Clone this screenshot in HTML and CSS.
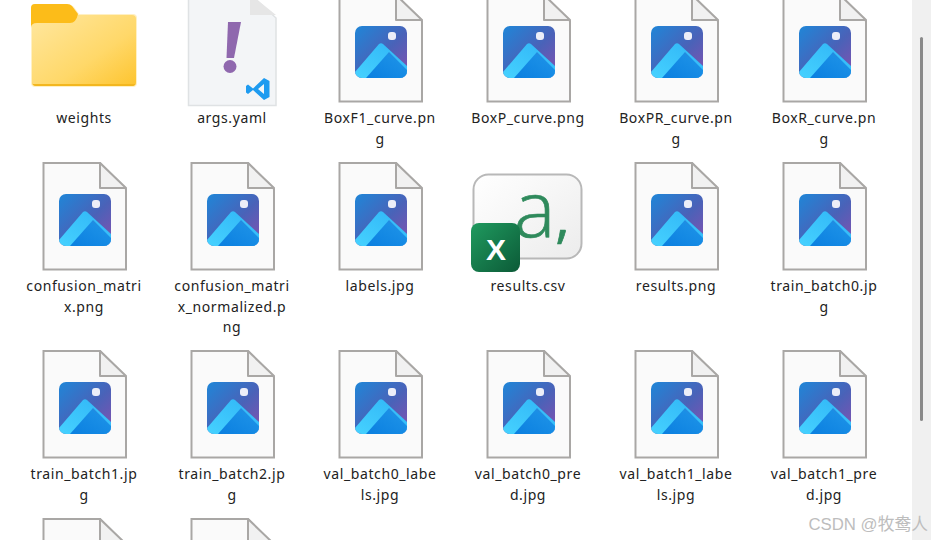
FILE: index.html
```html
<!DOCTYPE html>
<html>
<head>
  <title>exp</title>
  <link rel="stylesheet" href="styles.css">
</head>
<body>
  <svg class="defs" aria-hidden="true">
    <defs>
      <linearGradient id="imgBg" x1="0" y1="0" x2="1" y2="1">
        <stop offset="0" stop-color="#1f86d8"/>
        <stop offset="0.55" stop-color="#4a62b8"/>
        <stop offset="1" stop-color="#8550b0"/>
      </linearGradient>
      <linearGradient id="imgHill" x1="0" y1="1" x2="1" y2="0">
        <stop offset="0" stop-color="#46d2ff"/>
        <stop offset="1" stop-color="#2fb4f6"/>
      </linearGradient>
      <linearGradient id="imgHill2" x1="0" y1="1" x2="1" y2="0">
        <stop offset="0" stop-color="#0a7fe0"/>
        <stop offset="0.7" stop-color="#1a8fe6"/>
        <stop offset="1" stop-color="#4a7ac8"/>
      </linearGradient>
      <linearGradient id="folderBody" x1="0" y1="0" x2="1" y2="1">
        <stop offset="0" stop-color="#ffe79f"/>
        <stop offset="0.6" stop-color="#ffd869"/>
        <stop offset="1" stop-color="#fdc42e"/>
      </linearGradient>
      <linearGradient id="sheetBg" x1="0" y1="0" x2="1" y2="1">
        <stop offset="0" stop-color="#ffffff"/>
        <stop offset="1" stop-color="#ececec"/>
      </linearGradient>
      <linearGradient id="xlBg" x1="0" y1="0" x2="1" y2="1">
        <stop offset="0" stop-color="#1f9a5f"/>
        <stop offset="1" stop-color="#0c5a37"/>
      </linearGradient>
      <clipPath id="imgClip"><rect x="49" y="32" width="52" height="52" rx="7"/></clipPath>
      <symbol id="image-file" viewBox="0 0 148 112">
        <path d="M33.500 1H90L116 27V107.500H33.500Z" fill="#fafafa" stroke="#a9a7a5" stroke-width="2"/>
        <path d="M90 1V26H116Z" fill="#f1f1f1" stroke="#a9a7a5" stroke-width="2" stroke-linejoin="round"/>
        <g clip-path="url(#imgClip)">
          <rect x="49" y="32" width="52" height="52" fill="url(#imgBg)"/>
          <path d="M49 78L73 50Q75 48.500 77 50L101 72V84H49Z" fill="url(#imgHill)"/>
          <path d="M60 84L83 58L101 76V84Z" fill="url(#imgHill2)"/>
          <rect x="82" y="38" width="8" height="8" rx="3" fill="#eceef8"/>
        </g>
      </symbol>
    </defs>
  </svg>

  <main class="grid">
    <div class="item">
      <svg class="icon" viewBox="0 0 148 112">
        <path d="M21 14Q21 10 25 10H57Q61 10 64 13L69 20H123Q127 20 127 24V89Q127 93 123 93H25Q21 93 21 89Z" fill="#fff0c4"/>
        <path d="M22 30Q22 21 26 21H122Q126 21 126 25V88Q126 92 122 92H26Q22 92 22 88Z" fill="url(#folderBody)"/>
        <path d="M22 90H126V88Q126 92 122 92H26Q22 92 22 88Z" fill="#f3b71f"/>
        <path d="M21 14Q21 10 25 10H57Q60 10 62 12L68 20Q66 29 60 29H27Q21 29 21 34Z" fill="#fcbc19"/>
      </svg>
      <div class="label">weights</div>
    </div>
    <div class="item">
      <svg class="icon" viewBox="0 0 148 112">
        <path d="M30.500 0H92L118 24V111.500H30.500Z" fill="#f3f5f7" stroke="#dfe2e4" stroke-width="1.500"/>
        <path d="M92 0V21H118Z" fill="#e6e6e6"/>
        <path d="M70 28H83L76 64H68.500Z" fill="#8f68ae"/>
        <circle cx="72" cy="72.500" r="6.500" fill="#8f68ae"/>
        <path d="M106 84L111.500 87V103L106 106L95 96L90 100L88 98.500V92L90 90.500L95 94.500ZM106 90L100 95L106 100Z" fill="#1e9bf0" fill-rule="evenodd"/>
      </svg>
      <div class="label">args.yaml</div>
    </div>
    <div class="item"><svg class="icon"><use href="#image-file"/></svg><div class="label">BoxF1_curve.pn<br>g</div></div>
    <div class="item"><svg class="icon"><use href="#image-file"/></svg><div class="label">BoxP_curve.png</div></div>
    <div class="item"><svg class="icon"><use href="#image-file"/></svg><div class="label">BoxPR_curve.pn<br>g</div></div>
    <div class="item"><svg class="icon"><use href="#image-file"/></svg><div class="label">BoxR_curve.pn<br>g</div></div>

    <div class="item"><svg class="icon"><use href="#image-file"/></svg><div class="label">confusion_matri<br>x.png</div></div>
    <div class="item"><svg class="icon"><use href="#image-file"/></svg><div class="label">confusion_matri<br>x_normalized.p<br>ng</div></div>
    <div class="item"><svg class="icon"><use href="#image-file"/></svg><div class="label">labels.jpg</div></div>
    <div class="item">
      <svg class="icon" viewBox="0 0 148 112">
        <rect x="19.500" y="12.500" width="108" height="84" rx="15" fill="url(#sheetBg)" stroke="#b8b8b8" stroke-width="2"/>
        <text class="csv-glyph" x="60" y="75">a<tspan class="csv-comma">,</tspan></text>
        <rect x="17" y="61" width="49" height="49" rx="8" fill="url(#xlBg)"/>
        <text class="xl-glyph" x="42" y="97.500">X</text>
      </svg>
      <div class="label">results.csv</div>
    </div>
    <div class="item"><svg class="icon"><use href="#image-file"/></svg><div class="label">results.png</div></div>
    <div class="item"><svg class="icon"><use href="#image-file"/></svg><div class="label">train_batch0.jp<br>g</div></div>

    <div class="item"><svg class="icon"><use href="#image-file"/></svg><div class="label">train_batch1.jp<br>g</div></div>
    <div class="item"><svg class="icon"><use href="#image-file"/></svg><div class="label">train_batch2.jp<br>g</div></div>
    <div class="item"><svg class="icon"><use href="#image-file"/></svg><div class="label">val_batch0_labe<br>ls.jpg</div></div>
    <div class="item"><svg class="icon"><use href="#image-file"/></svg><div class="label">val_batch0_pre<br>d.jpg</div></div>
    <div class="item"><svg class="icon"><use href="#image-file"/></svg><div class="label">val_batch1_labe<br>ls.jpg</div></div>
    <div class="item"><svg class="icon"><use href="#image-file"/></svg><div class="label">val_batch1_pre<br>d.jpg</div></div>

    <div class="item"><svg class="icon"><use href="#image-file"/></svg></div>
    <div class="item"><svg class="icon"><use href="#image-file"/></svg></div>
  </main>

  <aside class="scrollbar">
    <div class="thumb"></div>
  </aside>

  <div class="watermark">CSDN @牧鸯人</div>
</body>
</html>
```

FILE: styles.css
```css
html, body {
  height: 100%;
  margin: 0;
  overflow: hidden;
}

body {
  display: flex;
  background-color: #fff;
  color: #222;
  font-family: "Noto Sans", "Noto Sans CJK SC", sans-serif;
}

.defs {
  position: absolute;
  width: 0;
  height: 0;
}

.grid {
  flex: 1;
  display: grid;
  grid-template-columns: repeat(6, 148px);
  grid-auto-rows: min-content;
  align-content: start;
  margin-top: -6px;
  padding-left: 10px;
}

.item {
  box-sizing: border-box;
  min-height: 168px;
  padding-bottom: 12.500px;
}

.icon {
  display: block;
  width: 148px;
  height: 112px;
  overflow: visible;
}

.label {
  margin-top: 2px;
  text-align: center;
  white-space: nowrap;
  font-size: 14px;
  line-height: 20.500px;
  letter-spacing: 0.6px;
}

.csv-glyph {
  font-family: "Open Sans", sans-serif;
  font-size: 78px;
  font-weight: 300;
  fill: #2f8a5c;
  stroke: #2f8a5c;
  stroke-width: 0.7px;
}

.csv-comma {
  font-size: 56px;
  font-weight: 400;
}

.xl-glyph {
  font-family: "Liberation Sans", sans-serif;
  font-size: 30px;
  font-weight: 700;
  fill: #fff;
  text-anchor: middle;
}

.scrollbar {
  flex: none;
  width: 19px;
  background-color: #f0f0f0;
}

.thumb {
  width: 3px;
  height: 384px;
  margin: 37px 0 0 8px;
  background-color: #8a8a8a;
  border-radius: 2px;
}

.watermark {
  position: absolute;
  right: 3px;
  bottom: 4px;
  font-size: 16.800px;
  line-height: 22px;
  color: #bdbdbd;
  font-family: "Liberation Sans", "Noto Sans CJK SC", sans-serif;
}
```
